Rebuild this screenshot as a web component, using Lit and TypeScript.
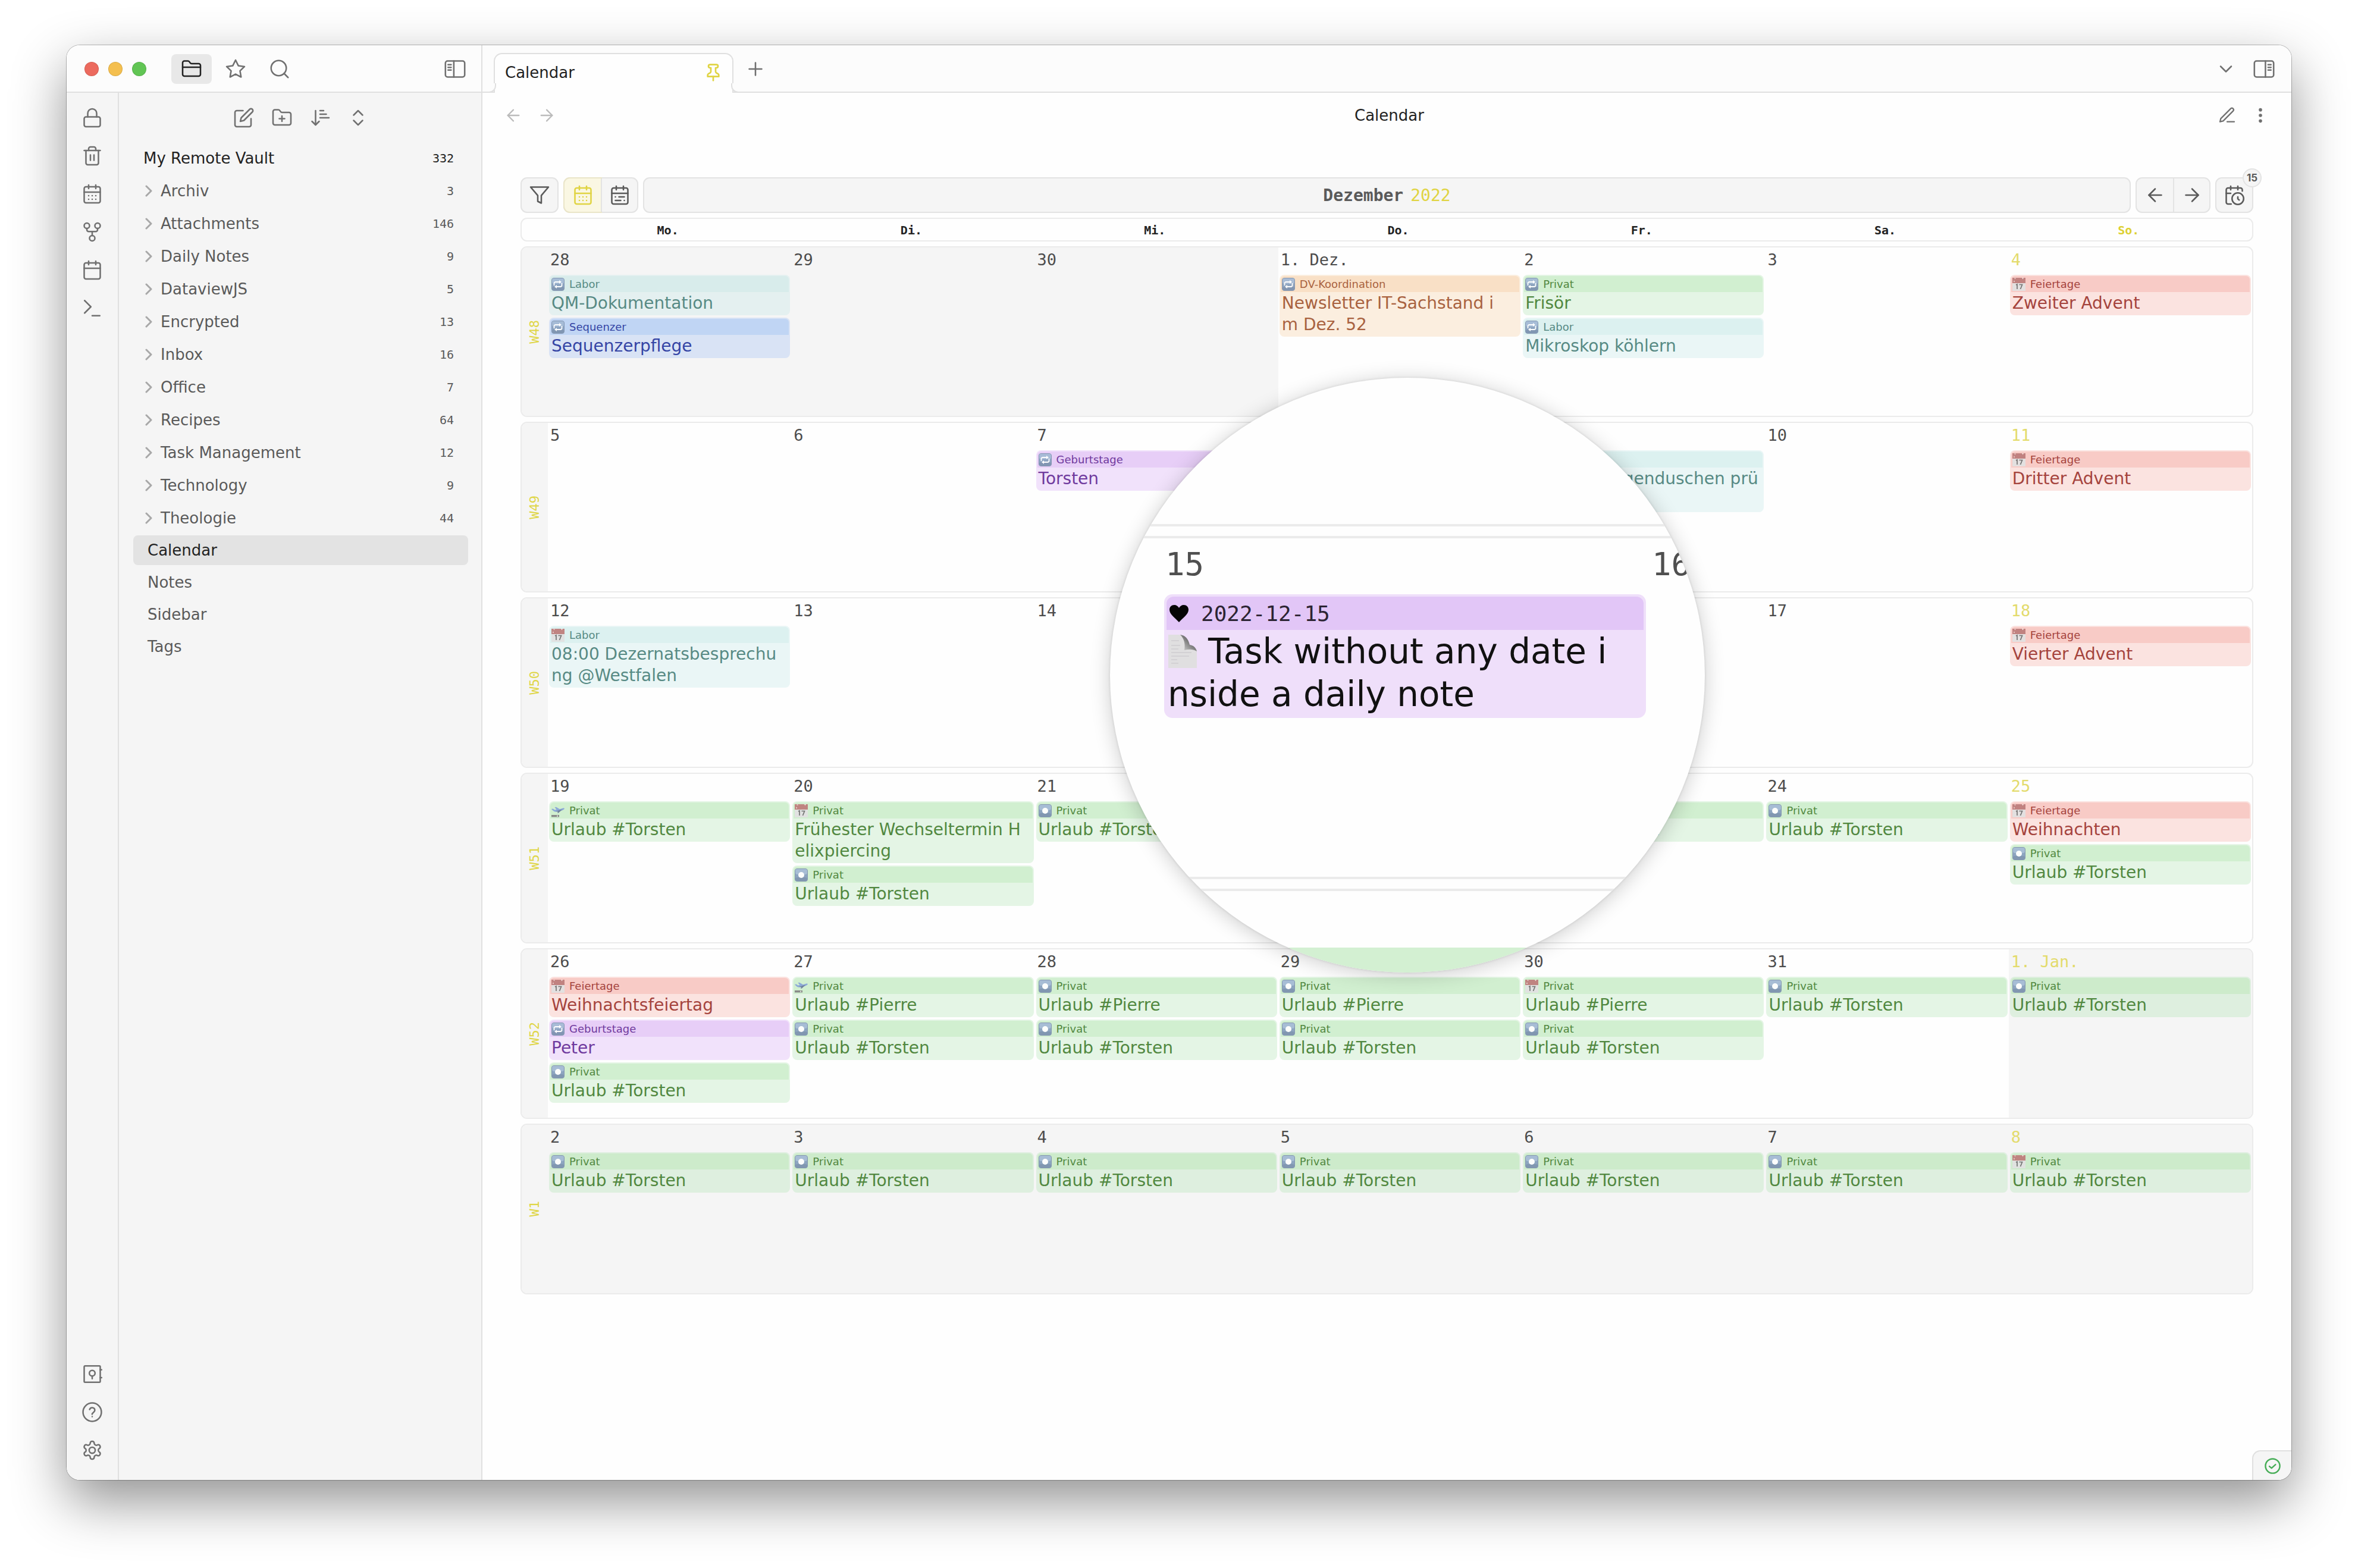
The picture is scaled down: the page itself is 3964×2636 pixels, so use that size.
import { LitElement, html, css, svg, nothing } from "lit";
import { customElement, property } from "lit/decorators.js";
import { classMap } from "lit/directives/class-map.js";

const p = (...ds: string[]) => svg`${ds.map((d) => svg`<path d=${d}></path>`)}`;

const CAL = "M5 4h14a2 2 0 0 1 2 2v14a2 2 0 0 1-2 2H5a2 2 0 0 1-2-2V6a2 2 0 0 1 2-2Z";
const FOLDER =
  "M4 20h16a2 2 0 0 0 2-2V8a2 2 0 0 0-2-2h-7.93a2 2 0 0 1-1.66-.9l-.82-1.2A2 2 0 0 0 7.93 3H4a2 2 0 0 0-2 2v13c0 1.1.9 2 2 2Z";

const ICONS: Record<string, unknown> = {
  folder: p(FOLDER, "M2 10h20"),
  folderPlus: p(FOLDER, "M12 10v6", "M9 13h6"),
  star: p("M12 2l3.09 6.26L22 9.27l-5 4.87 1.18 6.88L12 17.77l-6.18 3.25L7 14.14 2 9.27l6.91-1.01L12 2z"),
  search: svg`<circle cx="11" cy="11" r="8.5"></circle><path d="m21.5 21.5-4.5-4.5"></path>`,
  panelLeft: svg`<rect x="1.2" y="3" width="21.6" height="18" rx="2.4"></rect><path d="M10.6 3v18M4.2 7.2h3.4M4.2 10.2h3.4M4.2 13.2h3.4"></path>`,
  panelRight: svg`<rect x="1.2" y="3" width="21.6" height="18" rx="2.4"></rect><path d="M13.6 3v18M16.6 7.2h3.2M16.6 10.2h3.2M16.6 13.2h3.2"></path>`,
  lock: svg`<rect x="3" y="11" width="18" height="11" rx="2"></rect><path d="M7 11V7a5 5 0 0 1 10 0v4"></path>`,
  trash: p("M3 6h18", "M19 6v14a2 2 0 0 1-2 2H7a2 2 0 0 1-2-2V6", "M8 6V4c0-1 1-2 2-2h4c1 0 2 1 2 2v2", "M10 11v6", "M14 11v6"),
  calDays: p(CAL, "M16 2v4", "M8 2v4", "M3 10h18", "M8 14h.01", "M12 14h.01", "M16 14h.01", "M8 18h.01", "M12 18h.01", "M16 18h.01"),
  calRange: p(CAL, "M16 2v4", "M8 2v4", "M3 10h18", "M17 14h-6", "M13 18H7", "M7 14h.01", "M17 18h.01"),
  cal: p(CAL, "M16 2v4", "M8 2v4", "M3 10h18"),
  calClock: p(
    "M21 7.5V6a2 2 0 0 0-2-2H5a2 2 0 0 0-2 2v14a2 2 0 0 0 2 2h3.5",
    "M16 2v4", "M8 2v4", "M3 10h5", "M17.5 17.5 16 16.25V14", "M22.5 16a6.5 6.5 0 1 1-13 0 6.5 6.5 0 0 1 13 0Z"
  ),
  fork: svg`<circle cx="12" cy="19" r="3"></circle><circle cx="6" cy="5" r="3"></circle><circle cx="18" cy="5" r="3"></circle><path d="M18 8v1.5a2 2 0 0 1-2 2H8a2 2 0 0 1-2-2V8M12 11.500v4.500"></path>`,
  terminal: p("m3.500 3.500 7 7-7 7", "M12 20.500h8.500"),
  vault: svg`<rect x="3" y="2.800" width="18" height="18.400" rx="1"></rect><circle cx="12" cy="11" r="3.200"></circle><path d="M12 14.200v3M21 7.200h1.500M21 16h1.500"></path>`,
  help: svg`<circle cx="12" cy="12" r="10.300"></circle><path d="M9.09 9a3 3 0 0 1 5.83 1c0 2-3 2.500-3 4.300M12 17h.01"></path>`,
  gear: svg`<path d="M12.22 2h-.44a2 2 0 0 0-2 2v.18a2 2 0 0 1-1 1.73l-.43.25a2 2 0 0 1-2 0l-.15-.08a2 2 0 0 0-2.73.73l-.22.38a2 2 0 0 0 .73 2.73l.15.1a2 2 0 0 1 1 1.72v.51a2 2 0 0 1-1 1.74l-.15.09a2 2 0 0 0-.73 2.73l.22.38a2 2 0 0 0 2.73.73l.15-.08a2 2 0 0 1 2 0l.43.25a2 2 0 0 1 1 1.73V20a2 2 0 0 0 2 2h.44a2 2 0 0 0 2-2v-.18a2 2 0 0 1 1-1.73l.43-.25a2 2 0 0 1 2 0l.15.08a2 2 0 0 0 2.73-.73l.22-.39a2 2 0 0 0-.73-2.73l-.15-.08a2 2 0 0 1-1-1.74v-.5a2 2 0 0 1 1-1.74l.15-.09a2 2 0 0 0 .73-2.73l-.22-.38a2 2 0 0 0-2.73-.73l-.15.08a2 2 0 0 1-2 0l-.43-.25a2 2 0 0 1-1-1.73V4a2 2 0 0 0-2-2z"></path><circle cx="12" cy="12" r="3.400"></circle>`,
  edit: p("M11 4H4a2 2 0 0 0-2 2v14a2 2 0 0 0 2 2h14a2 2 0 0 0 2-2v-7", "M18.5 2.5a2.121 2.121 0 0 1 3 3L12 15l-4 1 1-4 9.500-9.500z"),
  sort: p("m3 16 4 4 4-4", "M7 20V4", "M12 4h4", "M12 8h7", "M12 12h10"),
  upDown: p("m7 15 5 5 5-5", "m7 9 5-5 5 5"),
  chevRight: p("m8 4 8 8-8 8"),
  chevDown: p("m6 9 6 6 6-6"),
  pin: p("M12 17v5", "M5 17h14v-1.76a2 2 0 0 0-1.11-1.79l-1.78-.9A2 2 0 0 1 15 10.76V6h1a2 2 0 0 0 0-4H8a2 2 0 0 0 0 4h1v4.76a2 2 0 0 1-1.11 1.79l-1.78.9A2 2 0 0 0 5 15.24Z"),
  plus: p("M5 12h14", "M12 5v14"),
  left: p("M19 12H5", "m12 19-7-7 7-7"),
  right: p("M5 12h14", "m12 5 7 7-7 7"),
  pen: p("M12 20h9", "M16.5 3.5a2.12 2.12 0 0 1 3 3L7 19l-4 1 1-4Z"),
  more: svg`<g fill="currentColor" stroke-width="1.200"><circle cx="12" cy="5" r="1.500"></circle><circle cx="12" cy="12" r="1.500"></circle><circle cx="12" cy="19" r="1.500"></circle></g>`,
  funnel: p("M22 3H2l8 9.460V19l4 2v-8.540L22 3z"),
  check: svg`<circle cx="12" cy="12" r="10"></circle><path d="m7.500 12.500 3 2.500 5.500-5"></path>`,
};

const icon = (name: string, size = 36, weight = 1.7) => svg`<svg class="icon" width=${size} height=${size} viewBox="0 0 24 24" fill="none"
  stroke="currentColor" stroke-width=${weight} stroke-linecap="round" stroke-linejoin="round" aria-hidden="true">${ICONS[name]}</svg>`;

const tile = svg`<rect x=".5" y=".5" width="21" height="21" rx="3.500" fill="#8aa2c0" stroke="#7f92ae"></rect>
  <rect x="1" y="1" width="20" height="9" rx="3" fill="#a5bbd6"></rect><rect x="1" y="15" width="20" height="6" rx="3" fill="#7d93b0"></rect>`;

const MARKS: Record<string, unknown> = {
  repeat: svg`${tile}<g fill="none" stroke="#fff" stroke-width="1.800"><path d="M4.500 13V9.500a2.500 2.500 0 0 1 2.500-2.500h7M17.500 9v3.500a2.500 2.500 0 0 1-2.500 2.500H8"></path></g><path d="M13 4v6l4-3zM9 12v6l-4-3z" fill="#fff"></path>`,
  record: svg`${tile}<circle cx="11" cy="11" r="5" fill="#fff"></circle>`,
  date: svg`<rect y="1" width="22" height="21" fill="#e2e2e2"></rect><path d="M0 0h22v9H0z" fill="#bf7f7d"></path>
    <path d="M3 1.500l1.500-1.500 1.500 2zM16 0l1.500 2.500 1.500-2.500zM2 7l1-3 1 3z" fill="#f3e4e2"></path>
    <path d="M6 12l2-1v8M11.500 11.500h5l-3 7.500" fill="none" stroke="#6f6f6f" stroke-width="1.700"></path>`,
  plane: svg`<path d="M0 8l2.500-.500 3 2 3-.500-3-4 2.500-.300 6 3.500 5-1.500c2-.500 3.500.500 2.500 1.500-3 2.500-8 4-14 4.500-3 0-5-1.500-7.500-4.700z" fill="#8aa6d8"></path>
    <path d="M7 12l8-2.500 3-.500-6 5.500-2 .500 1-2.500z" fill="#6b7c9a"></path><rect y="18" width="13" height="3.500" fill="#868686"></rect><rect x="9" y="18.800" width="2" height="2" fill="#d9d9d9"></rect>`,
};
const mark = (name: string) => svg`<svg class="mark" width="22" height="22" viewBox="0 0 22 22" aria-hidden="true">${MARKS[name]}</svg>`;

interface Task { kind: string; mark: string; list: string; lines: string[] }
interface Day { label: string; off?: boolean; tasks: Task[] }

const t = (kind: string, m: string, list: string, ...lines: string[]): Task => ({ kind, mark: m, list, lines });
const d = (label: string, ...tasks: Task[]): Day => ({ label, tasks });
const off = (label: string, ...tasks: Task[]): Day => ({ label, off: true, tasks });
const trip = (who: string, m = "record") => t("green", m, "Privat", `Urlaub #${who}`);
const holiday = (name: string) => t("red", "date", "Feiertage", name);

const WEEKS: { name: string; days: Day[] }[] = [
  { name: "W48", days: [
    off("28", t("teal", "repeat", "Labor", "QM-Dokumentation"), t("blue", "repeat", "Sequenzer", "Sequenzerpflege")),
    off("29"), off("30"),
    d("1. Dez.", t("orange", "repeat", "DV-Koordination", "Newsletter IT-Sachstand i", "m Dez. 52")),
    d("2", t("green", "repeat", "Privat", "Frisör"), t("teal", "repeat", "Labor", "Mikroskop köhlern")),
    d("3"), d("4", holiday("Zweiter Advent")) ] },
  { name: "W49", days: [
    d("5"), d("6"), d("7", t("purple", "repeat", "Geburtstage", "Torsten")), d(""),
    d("", t("teal", "repeat", "Labor", "Wartung Augenduschen prü", "fen")), d("10"), d("11", holiday("Dritter Advent")) ] },
  // The lens covers the 15th and 16th and carries their labels.
  { name: "W50", days: [
    d("12", t("teal", "date", "Labor", "08:00 Dezernatsbesprechu", "ng @Westfalen")),
    d("13"), d("14"), d(""), d(""), d("17"), d("18", holiday("Vierter Advent")) ] },
  { name: "W51", days: [
    d("19", trip("Torsten", "plane")),
    d("20", t("green", "date", "Privat", "Frühester Wechseltermin H", "elixpiercing"), trip("Torsten")),
    d("21", trip("Torsten")), d("22", trip("Torsten")), d("23", trip("Torsten")), d("24", trip("Torsten")),
    d("25", holiday("Weihnachten"), trip("Torsten")) ] },
  { name: "W52", days: [
    d("26", holiday("Weihnachtsfeiertag"), t("purple", "repeat", "Geburtstage", "Peter"), trip("Torsten")),
    d("27", trip("Pierre", "plane"), trip("Torsten")), d("28", trip("Pierre"), trip("Torsten")),
    d("29", trip("Pierre"), trip("Torsten")), d("30", trip("Pierre", "date"), trip("Torsten")),
    d("31", trip("Torsten")), off("1. Jan.", trip("Torsten")) ] },
  { name: "W1", days: [
    ...["2", "3", "4", "5", "6", "7"].map((n) => off(n, trip("Torsten"))), off("8", trip("Torsten", "date")) ] },
];

const FOLDERS: [string, number][] = [
  ["Archiv", 3], ["Attachments", 146], ["Daily Notes", 9], ["DataviewJS", 5], ["Encrypted", 13], ["Inbox", 16],
  ["Office", 7], ["Recipes", 64], ["Task Management", 12], ["Technology", 9], ["Theologie", 44],
];
const FILES = ["Calendar", "Notes", "Sidebar", "Tags"];

const base = css`
  :host {
    --sans: "DejaVu Sans", sans-serif;
    --mono: "DejaVu Sans Mono", monospace;
    --line: #e0e0e0;
    --side: #f5f5f5;
    --accent: #e0d443;
    font-family: var(--sans);
    box-sizing: border-box;
  }
  * { box-sizing: border-box; }
  button {
    font: inherit; color: inherit; background: none; border: 0; padding: 0; margin: 0;
    display: flex; align-items: center; justify-content: center; cursor: pointer;
  }
  a { color: inherit; text-decoration: none; }
  .icon, .mark { display: block; flex: none; }
`;

@customElement("file-sidebar")
export class FileSidebar extends LitElement {
  static styles = [base, css`
    :host { display: flex; flex-direction: column; background: var(--side); border-right: 2px solid var(--line); color: #5a5a5a; font-size: 26px; padding: 0 22px 0 24px; }
    .tools { display: flex; justify-content: center; align-items: center; gap: 28px; height: 84px; color: #707070; }
    .tree { display: flex; flex-direction: column; gap: 4px; list-style: none; margin: 0; padding: 0; }
    .row { display: flex; align-items: center; width: 100%; height: 51px; border-radius: 8px; padding: 0 24px 0 17px; white-space: nowrap; }
    .name { flex: 1; text-align: left; }
    .count { font: 20px var(--mono); }
    .vault { color: #222; }
    .chev { display: flex; color: #a8a8a8; margin-right: 8px; padding-left: 0; }
    .folder { padding-left: 14px; }
    .file { height: 50px; padding-left: 24px; }
    .open { background: #e3e3e3; color: #222; }
  `];
  render() {
    return html`
      <div class="tools">
        ${[["edit", "New note"], ["folderPlus", "New folder"], ["sort", "Change sort order"], ["upDown", "Expand all"]].map(
          ([i, l]) => html`<button aria-label=${l}>${icon(i)}</button>`)}
      </div>
      <ul class="tree">
        <li class="row vault"><span class="name">My Remote Vault</span><span class="count">332</span></li>
        ${FOLDERS.map(([n, c]) => html`<li><button class="row folder"><span class="chev">${icon("chevRight", 24, 3)}</span><span class="name">${n}</span><span class="count">${c}</span></button></li>`)}
        ${FILES.map((f, i) => html`<li><a href="#" class=${classMap({ row: true, file: true, open: i === 0 })}>${f}</a></li>`)}
      </ul>`;
  }
}

@customElement("task-chip")
export class TaskChip extends LitElement {
  @property({ attribute: false }) task!: Task;
  static styles = [base, css`
    :host { display: block; }
    .chip { border-radius: 8px; padding: 2px; background: var(--body); color: var(--ink); }
    .head { display: flex; align-items: center; gap: 8px; height: 27px; padding: 0 2px; border-radius: 6px 6px 0 0; background: var(--strip); font-size: 18px; }
    .text { padding: 1px 2px 0; font-size: 28px; line-height: 36px; white-space: nowrap; }
    .line { display: block; }
    .mark { opacity: 0.95; }
    .green { --body: rgba(168,225,172,.3); --strip: rgba(165,224,160,.3); --ink: #518840; }
    .teal { --body: rgba(188,228,228,.3); --strip: rgba(188,228,224,.3); --ink: #578a84; }
    .blue { --body: rgba(152,184,245,.3); --strip: rgba(140,184,244,.32); --ink: #3545a5; }
    .orange { --body: rgba(245,202,152,.3); --strip: rgba(245,196,145,.32); --ink: #a9623f; }
    .red { --body: rgba(245,165,155,.3); --strip: rgba(243,160,153,.36); --ink: #a5433d; }
    .purple { --body: rgba(212,162,245,.3); --strip: rgba(210,160,240,.3); --ink: #703a9e; }
  `];
  render() {
    const k = this.task;
    return html`<div class="chip ${k.kind}">
      <div class="head">${mark(k.mark)}<span>${k.list}</span></div>
      <div class="text">${k.lines.map((l) => html`<span class="line">${l}</span>`)}</div>
    </div>`;
  }
}

@customElement("day-lens")
export class DayLens extends LitElement {
  static styles = [base, css`
    :host { display: flex; flex-direction: column; gap: 16px; width: 1000px; height: 1000px; border-radius: 50%; overflow: hidden; background: #fefefe;
      box-shadow: 0 0 4px rgba(0,0,0,.12), 0 4px 34px rgba(0,0,0,.2); }
    .week { flex: none; border: solid #ebebeb; border-width: 4px 0; display: grid; grid-template-columns: 87px 818px 1fr; }
    .prev { height: 250px; border-top: 0; }
    .now { height: 577px; }
    .next { height: 200px; padding-top: 95px; }
    .day { grid-column: 2; padding: 0 4px; }
    .after { grid-column: 3; padding-left: 4px; }
    .date { font: 54px/80px var(--mono); height: 94px; color: #4f4f4f; padding: 4px 0 0 2px; }
    .chip { border-radius: 14px; padding: 4px; background: #efdffa; color: #111; }
    .head { display: flex; align-items: center; gap: 20px; height: 56px; padding: 0 4px; border-radius: 12px 12px 0 0; background: #e2c6f7; font: 36px var(--mono); color: #2c2433; }
    .text { padding: 0 2px; font-size: 58px; line-height: 72px; white-space: nowrap; }
    .line { display: flex; align-items: center; gap: 18px; height: 72px; }
    .green { grid-column: 2; margin: 0 4px; border-radius: 14px; background: #d3f0d2; }
  `];
  render() {
    return html`
      <div class="week prev"></div>
      <div class="week now">
        <div class="day">
          <div class="date">15</div>
          <div class="chip">
            <div class="head">
              <svg width="34" height="30" viewBox="0 0 34 30" aria-hidden="true"><path d="M17 30C10 22 1 17 1 9c0-5 3.500-8 8-8 3.500 0 6.500 2 8 5 1.500-3 4.500-5 8-5 4.500 0 8 3 8 8 0 8-9 13-16 21z" fill="#050505"></path></svg>
              <span>2022-12-15</span>
            </div>
            <div class="text">
              <span class="line">
                <svg width="50" height="56" viewBox="0 0 48 56" aria-hidden="true">
                  <defs><linearGradient id="curl" x1="0" y1="1" x2="1" y2="0"><stop offset="0" stop-color="#dedede"></stop><stop offset=".6" stop-color="#6f6f6f"></stop><stop offset="1" stop-color="#a8a8a8"></stop></linearGradient></defs>
                  <path d="M0 0h20c8 3 12 10 14 18 6 1 11 4 14 8v30H0z" fill="#e0dfe0"></path>
                  <path d="M20 0c6 6 9 14 7 26 7-2 15-2 21 2-2-7-6-10-12-11C34 8 29 1 20 0z" fill="url(#curl)"></path>
                  <path d="M5 10h13M5 18h15M5 24h12M5 30h34M5 36h30M5 42h10M5 48h12" stroke="#d3d1d4" stroke-width="2"></path>
                </svg>
                <span>Task without any date i</span>
              </span>
              <span class="line">nside a daily note</span>
            </div>
          </div>
        </div>
        <div class="after"><div class="date">16</div></div>
      </div>
      <div class="week next"><div class="green"></div></div>`;
  }
}

@customElement("task-calendar")
export class TaskCalendar extends LitElement {
  static styles = [base, css`
    :host { display: flex; flex-direction: column; gap: 8px; }
    .bar { display: flex; gap: 8px; height: 60px; color: #5a5a5a; }
    .box { display: flex; border: 2px solid #e3e3e3; border-radius: 11px; background: var(--side); }
    .box button { width: 60px; }
    .pair button { width: 61px; }
    .pair button + button { border-left: 2px solid #e3e3e3; }
    .on { background: #faf7e3; color: var(--accent); border-radius: 9px 0 0 9px; box-shadow: 0 0 0 2px #eae5c8; }
    .title { flex: 1; font: bold 28px var(--mono); gap: 12px; align-items: center; justify-content: center; display: flex; }
    .year { color: var(--accent); font-weight: normal; }
    .today { position: relative; }
    .badge { position: absolute; top: -17px; right: -16px; width: 32px; height: 32px; border-radius: 50%; border: 2px solid #e3e3e3; background: var(--side);
      font: bold 17px/28px Inter, sans-serif; text-align: center; }
    .grid { position: relative; }
    table, thead, tbody { display: flex; flex-direction: column; gap: 8px; }
    tr { display: grid; grid-template-columns: 44px repeat(7, minmax(0, 1fr)); border: 2px solid #ebebeb; border-radius: 11px; overflow: hidden; }
    th, td { padding: 0; text-align: left; font-weight: normal; }
    .names { height: 40px; }
    .names th { font: bold 20px/38px var(--mono); text-align: center; color: #222; padding-right: 6px; }
    .names .sun { color: #ddd033; }
    .week { min-height: 287px; }
    .no { display: flex; align-items: center; justify-content: center; background: var(--side); color: #dfd646; font: 22px/24px var(--mono); }
    .no span { writing-mode: vertical-rl; transform: rotate(180deg); }
    .day { display: flex; flex-direction: column; gap: 4px; padding: 0 2px; }
    .off { background: var(--side); }
    .date { font: 27px/42px var(--mono); height: 42px; color: #4c4c4c; padding-left: 2px; }
    .sun .date { color: #e3db6c; }
    day-lens { position: absolute; left: 991px; top: 269px; }
  `];
  render() {
    const names = ["Mo.", "Di.", "Mi.", "Do.", "Fr.", "Sa.", "So."];
    return html`
      <div class="bar">
        <div class="box"><button aria-label="Filter">${icon("funnel")}</button></div>
        <div class="box pair">
          <button class="on" aria-label="Month view">${icon("calDays")}</button>
          <button aria-label="List view">${icon("calRange")}</button>
        </div>
        <div class="box title"><span>Dezember</span><span class="year">2022</span></div>
        <div class="box pair">
          <button aria-label="Previous month">${icon("left")}</button>
          <button aria-label="Next month">${icon("right")}</button>
        </div>
        <div class="box today"><button aria-label="Today">${icon("calClock")}</button><span class="badge">15</span></div>
      </div>
      <div class="grid">
        <table>
          <thead><tr class="names"><td></td>${names.map((n, i) => html`<th scope="col" class=${i === 6 ? "sun" : nothing}>${n}</th>`)}</tr></thead>
          <tbody>${WEEKS.map((w) => html`<tr class="week">
            <th scope="row" class="no"><span>${w.name}</span></th>
            ${w.days.map((day, i) => html`<td class=${classMap({ day: true, off: !!day.off, sun: i === 6 })}>
              <div class="date">${day.label}</div>
              ${day.tasks.map((k) => html`<task-chip .task=${k}></task-chip>`)}
            </td>`)}
          </tr>`)}</tbody>
        </table>
        <day-lens></day-lens>
      </div>`;
  }
}

@customElement("app-root")
export class AppRoot extends LitElement {
  static styles = [base, css`
    :host { display: flex; min-height: 100vh; background: #fff; padding: 76px 112px 148px; }
    .window { flex: 1; min-width: 0; display: grid; grid-template-columns: 88px 611px minmax(0, 1fr); grid-template-rows: 80px 1fr; border-radius: 22px; overflow: hidden; background: #fefefe; }
    .shade { flex: 1; min-width: 0; display: flex; border-radius: 22px; box-shadow: 0 0 0 1px rgba(0,0,0,.25), 0 36px 90px rgba(0,0,0,.43); }
    .top { grid-column: 1 / 3; display: flex; align-items: center; border-right: 2px solid var(--line); border-bottom: 2px solid var(--line); background: #fcfcfc; color: #707070; padding: 2px 26px 0 30px; }
    .lights { display: flex; gap: 16px; margin-right: 42px; }
    .light { width: 24px; height: 24px; border-radius: 50%; border: 1px solid rgba(0,0,0,.1); }
    .r { background: #ec6a5e; } .y { background: #f4bf4f; } .g { background: #61c554; }
    .modes { display: flex; gap: 6px; flex: 1; }
    .modes button { width: 68px; height: 50px; border-radius: 8px; }
    .modes .sel { background: #e8e8e8; color: #222; }
    .tabs { display: flex; align-items: center; border-bottom: 2px solid var(--line); background: #fcfcfc; color: #707070; padding: 2px 28px 0 19px; }
    .tab { position: relative; align-self: flex-end; display: flex; align-items: center; justify-content: space-between; width: 403px; height: 67px; margin-bottom: -2px; padding: 0 16px 4px 17px;
      border: 2px solid var(--line); border-bottom: 0; border-radius: 14px 14px 0 0; background: #fefefe; color: #222; font-size: 26px; }
    .tab::before, .tab::after { content: ""; position: absolute; bottom: 0; width: 14px; height: 14px; border: solid var(--line); background: #fcfcfc; }
    .tab::before { left: -14px; border-width: 0 2px 2px 0; border-radius: 0 0 12px 0; }
    .tab::after { right: -14px; border-width: 0 0 2px 2px; border-radius: 0 0 0 12px; }
    .tab .icon { color: var(--accent); }
    .add { margin-left: 19px; margin-right: auto; }
    .ends { display: flex; gap: 28px; }
    .ribbon { background: var(--side); border-right: 2px solid var(--line); color: #707070; display: flex; flex-direction: column; align-items: center; gap: 28px; padding: 24px 0 32px; }
    .gap { flex: 1; }
    .pane { display: flex; flex-direction: column; min-width: 0; }
    .head { display: grid; grid-template-columns: 1fr auto 1fr; align-items: center; height: 76px; padding: 0 36px; color: #707070; }
    .head h1 { font-size: 26px; font-weight: normal; margin: 0; padding-left: 8px; color: #222; }
    .nav { display: flex; gap: 24px; color: #bbb; }
    .acts { display: flex; gap: 24px; justify-content: flex-end; }
    task-calendar { margin: 66px 64px 0; }
    .status { margin: auto 0 0 auto; width: 66px; height: 50px; display: flex; align-items: center; justify-content: center; border: solid var(--line); border-width: 2px 0 0 2px; border-radius: 14px 0 0 0; background: var(--side); color: #47ad57; }
  `];
  render() {
    const rib = (list: string[][]) => list.map(([i, l]) => html`<button aria-label=${l}>${icon(i)}</button>`);
    return html`<div class="shade"><div class="window">
      <div class="top">
        <div class="lights"><span class="light r"></span><span class="light y"></span><span class="light g"></span></div>
        <div class="modes">
          <button class="sel" aria-label="Files">${icon("folder")}</button>
          <button aria-label="Starred">${icon("star")}</button>
          <button aria-label="Search">${icon("search")}</button>
        </div>
        <button aria-label="Collapse left sidebar">${icon("panelLeft")}</button>
      </div>
      <div class="tabs">
        <div class="tab"><span>Calendar</span>${icon("pin", 32, 2)}</div>
        <button class="add" aria-label="New tab">${icon("plus")}</button>
        <div class="ends">
          <button aria-label="Tab list">${icon("chevDown")}</button>
          <button aria-label="Expand right sidebar">${icon("panelRight")}</button>
        </div>
      </div>
      <nav class="ribbon">
        ${rib([["lock", "Lock"], ["trash", "Trash"], ["calDays", "Task calendar"], ["fork", "Graph"], ["cal", "Daily note"], ["terminal", "Commands"]])}
        <span class="gap"></span>
        ${rib([["vault", "Vaults"], ["help", "Help"], ["gear", "Settings"]])}
      </nav>
      <file-sidebar></file-sidebar>
      <main class="pane">
        <div class="head">
          <div class="nav"><button aria-label="Back">${icon("left", 32)}</button><button aria-label="Forward">${icon("right", 32)}</button></div>
          <h1>Calendar</h1>
          <div class="acts"><button aria-label="Edit">${icon("pen", 32)}</button><button aria-label="More">${icon("more", 32)}</button></div>
        </div>
        <task-calendar></task-calendar>
        <div class="status">${icon("check", 29, 2)}</div>
      </main>
    </div></div>`;
  }
}
